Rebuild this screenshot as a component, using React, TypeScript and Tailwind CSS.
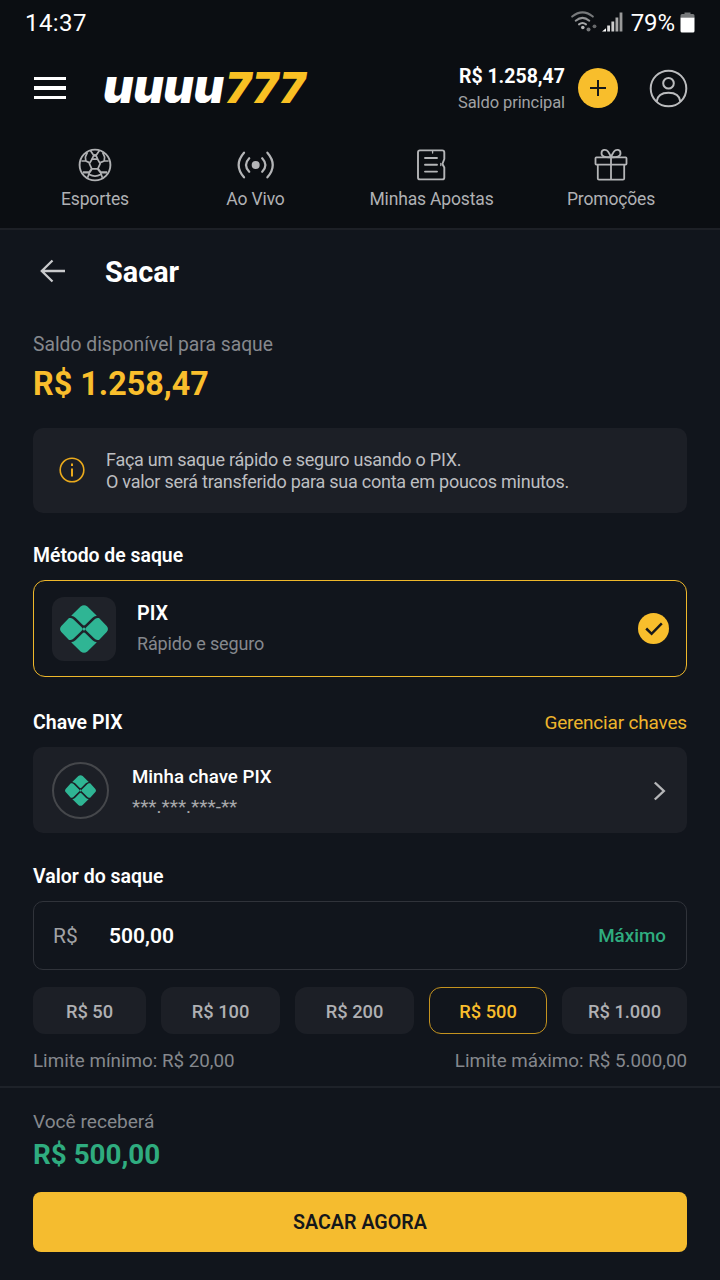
import React from "react";
import clsx from "clsx";

// --- Icons ---
const PixIcon = ({ className }: { className?: string }) => (
  <svg viewBox="0 0 48 48" className={className} fill="#2fb594">
    <path d="M20.6 1.6 Q24 -1.2 27.4 1.6 L36.8 10.8 Q34 11.2 32.2 12.9 L25.4 19.8 Q24 21.3 22.6 19.8 L15.8 12.9 Q14 11.2 11.2 10.8 Z" />
    <path d="M20.6 46.4 Q24 49.2 27.4 46.4 L36.8 37.2 Q34 36.8 32.2 35.1 L25.4 28.2 Q24 26.7 22.6 28.2 L15.8 35.1 Q14 36.8 11.2 37.2 Z" />
    <path d="M9 12.9 H10.6 Q12.4 13.1 13.6 14.4 L21.4 22 Q23.8 24 21.4 26 L13.6 33.6 Q12.4 34.9 10.6 35.1 H9 L1.3 26.9 Q-1.2 24 1.3 21.1 Z" />
    <path d="M39 12.9 H37.4 Q35.6 13.1 34.4 14.4 L26.6 22 Q24.2 24 26.6 26 L34.4 33.6 Q35.6 34.9 37.4 35.1 H39 L46.7 26.9 Q49.2 24 46.7 21.1 Z" />
    <circle cx="24" cy="24" r="1.5" />
  </svg>
);

const BallIcon = () => (
  <svg width="34" height="34" viewBox="0 0 34 34" fill="none" stroke="#b0b1b3" strokeWidth="1.7" strokeLinejoin="round">
    <circle cx="17" cy="17" r="15.4" strokeWidth="1.9" />
    <path d="M14 11.2 H19.6 L22.2 15.6 L19.8 20.8 H13.8 L11.4 15.6 Z" />
    <path d="M14 11.2 L15.8 7.4 L12.4 2.6 M19.6 11.2 L18 7.4 L21.4 2.6" />
    <path d="M15.8 7.4 H18" strokeWidth="2.6" />
    <path d="M11.4 14.6 L7.8 13 H3.4 M7.8 13 L7.4 9 L9.4 4.4 M22.2 14.6 L26.2 13 H30.6 M26.2 13 L26.6 9 L24.6 4.4" />
    <path d="M13.8 20.8 L11.4 24.4 H4.8 M19.8 20.8 L22.6 24.4 H29.2" strokeWidth="2.2" />
    <path d="M11.4 24.4 L9.6 29.8 M22.6 24.4 L24.4 29.8 M11.4 26.6 Q17 29.8 22.6 26.6" />
  </svg>
);

const LiveIcon = () => (
  <svg width="38" height="34" viewBox="0 0 38 34" fill="none" stroke="#b4b5b7" strokeWidth="2.2" strokeLinecap="round">
    <circle cx="18.7" cy="17" r="4" fill="#b4b5b7" stroke="none" />
    <path d="M12.2 10.2 Q5.8 17 12.2 23.8 M25.2 10.2 Q31.6 17 25.2 23.8" />
    <path d="M7 4.7 Q-3.7 17 7 29.3 M30.4 4.7 Q41.1 17 30.4 29.3" />
  </svg>
);

const BetsIcon = () => (
  <svg width="34" height="34" viewBox="0 0 34 34" fill="none" stroke="#b4b5b7" strokeWidth="1.9" strokeLinecap="round" strokeLinejoin="round">
    <path d="M4.6 2.4 H27.2 Q29.3 2.4 29.3 4.4 V11 L27.4 16 L29.3 19.5 V29.4 Q29.3 31.4 27.2 31.4 H5 Q3 31.4 3 29.4 V4.4 Q3 2.4 5 2.4" />
    <path d="M10 10 H22 M10 16.8 H22 M10 23.6 H22" />
    <path d="M17.6 3 V5 M25.8 15.4 V17.6" strokeWidth="1.3" />
  </svg>
);

const GiftIcon = () => (
  <svg width="34" height="34" viewBox="0 0 34 34" fill="none" stroke="#b4b5b7" strokeWidth="1.8" strokeLinejoin="round">
    <rect x="1.5" y="9.4" width="31" height="7.2" rx="0.8" />
    <path d="M3.8 16.6 V30.4 Q3.8 31.6 5 31.6 H29 Q30.2 31.6 30.2 30.4 V16.6" />
    <path d="M17 9 V31.4" />
    <path d="M17 9.2 C11 9.4 7.5 8.6 7.5 5.2 C7.5 1.4 12 .8 14 3.6 C15.3 5.4 16.2 7.2 17 9.2 Z" />
    <path d="M17 9.2 C23 9.4 26.5 8.6 26.5 5.2 C26.5 1.4 22 .8 20 3.6 C18.7 5.4 17.8 7.2 17 9.2 Z" />
  </svg>
);

const WifiIcon = () => (
  <svg width="26" height="22" viewBox="0 0 26 22" fill="none" strokeLinecap="round">
    <path d="M1.2 5.6 Q11.5 -2.8 21.8 5.6" stroke="#77797b" strokeWidth="2" />
    <path d="M4.7 9.7 Q11.5 4 18.3 9.7" stroke="#919294" strokeWidth="2" />
    <path d="M8 13.4 Q11.5 10.7 15 13.4" stroke="#a4a5a6" strokeWidth="2" />
    <circle cx="11.8" cy="16.5" r="1.8" fill="#b5b6b7" />
    <circle cx="17.5" cy="18.6" r="2" fill="#77797b" />
    <circle cx="23.5" cy="15.3" r="1.9" fill="#67696b" />
  </svg>
);

const SignalIcon = () => (
  <svg width="22" height="20" viewBox="0 0 22 20">
    <path d="M0 19.5 L4 16.2 V19.5 Z" fill="#fff" />
    <rect x="5.2" y="13.5" width="2.8" height="6" fill="#ddd" />
    <rect x="9.4" y="9.5" width="2.8" height="10" fill="#ccc" />
    <rect x="13.5" y="5.5" width="2.8" height="14" fill="#aaa" />
    <rect x="17.6" y="0.5" width="2.8" height="19" fill="#999" />
  </svg>
);

const BatteryIcon = () => (
  <svg width="15" height="21" viewBox="0 0 15 21">
    <path d="M4.5 0.5 H10.5 V2 H13 Q14.5 2 14.5 3.5 V5.5 H0.5 V3.5 Q0.5 2 2 2 H4.5 Z" fill="#77797b" />
    <path d="M0.5 5.5 H14.5 V19 Q14.5 20.5 13 20.5 H2 Q0.5 20.5 0.5 19 Z" fill="#fff" />
  </svg>
);

const tabs = [
  { label: "Esportes", icon: <BallIcon />, width: "w-[160px]" },
  { label: "Ao Vivo", icon: <LiveIcon />, width: "w-[161px]" },
  { label: "Minhas Apostas", icon: <BetsIcon />, width: "w-[191px]" },
  { label: "Promoções", icon: <GiftIcon />, width: "w-[168px]" },
];

const amounts = [
  { label: "R$ 50", width: "w-[113px]" },
  { label: "R$ 100", width: "w-[119px]" },
  { label: "R$ 200", width: "w-[119px]" },
  { label: "R$ 500", width: "w-[118px]", active: true },
  { label: "R$ 1.000", width: "w-[125px]" },
];

const Header = () => (
  <header className="border-b-2 border-[#1d2026] bg-[#0b0e12]">
    <div className="flex h-11 items-center px-[25px]">
      <span className="pt-px text-[24px] leading-7 tracking-[0.4px]">14:37</span>
      <div className="ml-auto flex items-center">
        <WifiIcon />
        <span className="ml-[5px] flex"><SignalIcon /></span>
        <span className="ml-[7px] pt-px text-[24px] leading-7 tracking-[-0.1px]">79%</span>
        <span className="ml-[5px] flex"><BatteryIcon /></span>
      </div>
    </div>

    <div className="flex h-[88px] items-center pr-8 pl-[34px]">
      <button className="flex w-8 flex-col gap-[6px]" aria-label="Menu">
        <span className="h-[3.5px] bg-white" />
        <span className="h-[3.5px] bg-white" />
        <span className="h-[3.5px] bg-white" />
      </button>
      <div className="mb-[5px] ml-[37px] flex h-[46px] items-baseline font-[Inter,sans-serif] font-black italic">
        <span className="text-[47px] leading-[46px] tracking-[-0.4px] text-white">uuuu</span>
        <span className="ml-[2px] text-[43px] leading-[46px] tracking-[0.5px] text-[#f9c023]">777</span>
      </div>
      <div className="ml-auto flex items-center">
        <div className="pt-[3px] text-right">
          <div className="text-[19.5px] leading-[26px] font-bold">R$ 1.258,47</div>
          <div className="text-[16.5px] leading-[26px] tracking-[-0.1px] text-[#a0a2a5]">Saldo principal</div>
        </div>
        <button className="ml-[13px] flex size-10 items-center justify-center rounded-full bg-[#f8be2c]" aria-label="Depositar">
          <svg width="18" height="18" viewBox="0 0 18 18" stroke="#15171b" strokeWidth="2">
            <path d="M9 1 V17 M1 9 H17" />
          </svg>
        </button>
        <button className="ml-[31px] flex" aria-label="Conta">
          <svg width="39" height="39" viewBox="0 0 39 39" fill="none" stroke="#bbbcbe" strokeWidth="2">
            <circle cx="19.5" cy="19.5" r="17.8" />
            <circle cx="19.5" cy="14.3" r="5.3" />
            <path d="M7.6 32.6 C8.4 26.4 13 23.8 19.5 23.8 C26 23.8 30.6 26.4 31.4 32.6" />
          </svg>
        </button>
      </div>
    </div>

    <nav className="flex h-24 pt-4 pl-[15px]">
      {tabs.map((tab) => (
        <a key={tab.label} className={clsx("flex flex-col items-center gap-[5px]", tab.width)}>
          {tab.icon}
          <span className="text-[17.5px] leading-6 tracking-[-0.15px] text-[#b0b1b4]">{tab.label}</span>
        </a>
      ))}
    </nav>
  </header>
);

export default function App() {
  return (
    <div className="flex h-[1280px] w-[720px] flex-col overflow-hidden bg-[#11151c] font-[Roboto,sans-serif] text-white">
      <Header />

      <main className="flex h-[856px] flex-col px-[33px]">
        <div className="flex h-[82px] items-center pl-[7px]">
          <svg width="26" height="24" viewBox="0 0 26 24" fill="none" stroke="#c9cacc" strokeWidth="2.3">
            <path d="M12.5 1.5 L1.8 12 L12.5 22.5 M1.8 12 H25" />
          </svg>
          <h1 className="ml-[39px] pt-px text-[28.8px] leading-8 font-bold">Sacar</h1>
        </div>

        <p className="mt-[21px] text-[19.3px] leading-6 text-[#85888d]">Saldo disponível para saque</p>
        <p className="mt-[7px] text-[32.3px] leading-10 font-bold text-[#f9be2c]">R$ 1.258,47</p>

        <div className="mt-[24px] flex h-[85px] items-center rounded-[10px] bg-[#1c1f26] pl-[26px]">
          <svg className="mb-px" width="26" height="26" viewBox="0 0 26 26" fill="none" stroke="#eaaa1c" strokeWidth="1.6">
            <circle cx="13" cy="13" r="11.8" />
            <path d="M13 11.6 V19.5" strokeWidth="2" />
            <path d="M13 6.4 V9" strokeWidth="2" />
          </svg>
          <p className="ml-[21px] text-[18px] leading-[22px] tracking-[-0.25px] text-[#bdbec1]">
            Faça um saque rápido e seguro usando o PIX.
            <br />
            O valor será transferido para sua conta em poucos minutos.
          </p>
        </div>

        <h2 className="mt-[31px] text-[19.4px] leading-6 font-semibold">Método de saque</h2>
        <div className="mt-[12px] flex h-[97px] shrink-0 items-center rounded-xl border-[1.5px] border-[#efb82b] pr-[17px] pl-[18px]">
          <div className="flex size-16 items-center justify-center rounded-xl bg-[#1f2229]">
            <PixIcon className="size-12" />
          </div>
          <div className="ml-[21px] pt-px">
            <div className="text-[19.8px] leading-[30px] font-semibold">PIX</div>
            <div className="text-[18px] leading-[30px] tracking-[-0.15px] text-[#85888d]">Rápido e seguro</div>
          </div>
          <div className="ml-auto flex size-[31px] items-center justify-center rounded-full bg-[#f8be2c]">
            <svg width="18" height="14" viewBox="0 0 18 14" fill="none" stroke="#15171b" strokeWidth="2.5">
              <path d="M1.2 6.5 L6.6 11.8 L16.8 1.4" />
            </svg>
          </div>
        </div>

        <div className="mt-[34px] flex justify-between leading-6">
          <h2 className="text-[19.5px] font-semibold">Chave PIX</h2>
          <a className="text-[19px] tracking-[-0.18px] text-[#eeb42c]">Gerenciar chaves</a>
        </div>
        <div className="mt-[12px] flex h-[86px] shrink-0 items-center rounded-[10px] bg-[#1c1f26] pt-px pr-[21px] pl-[19px]">
          <div className="flex size-[57px] items-center justify-center rounded-full border-2 border-[#45474b]">
            <PixIcon className="size-[31px]" />
          </div>
          <div className="ml-[23px] pt-[2px]">
            <div className="text-[18.7px] leading-[29px] font-medium">Minha chave PIX</div>
            <div className="text-[19px] leading-[29px] text-[#a7a8ab]">***.***.***-**</div>
          </div>
          <svg className="ml-auto" width="13" height="20" viewBox="0 0 13 20" fill="none" stroke="#b5b6b8" strokeWidth="2.4">
            <path d="M1.8 1.5 L10.8 10 L1.8 18.5" />
          </svg>
        </div>

        <h2 className="mt-[32px] text-[19.5px] leading-6 font-semibold">Valor do saque</h2>
        <div className="mt-[12px] flex h-[69px] shrink-0 items-center rounded-[10px] border-[1.5px] border-[#30333a] pt-[2px] pr-5 pl-[19px]">
          <span className="w-14 text-[21px] text-[#a0a2a5]">R$</span>
          <span className="text-[21px] font-semibold">500,00</span>
          <span className="ml-auto text-[18.8px] font-medium text-[#2fac7f]">Máximo</span>
        </div>

        <div className="mt-[17px] flex h-[47px] shrink-0 gap-[15px]">
          {amounts.map((amount) => (
            <button
              key={amount.label}
              className={clsx(
                "flex items-center justify-center rounded-xl pt-[2px] text-[18.3px] font-medium",
                amount.width,
                amount.active ? "border border-[#c4931f] text-[#f9be2c]" : "bg-[#1c1f26] text-[#afb0b3]",
              )}
            >
              {amount.label}
            </button>
          ))}
        </div>

        <div className="mt-[15px] flex justify-between text-[18.8px] leading-6 text-[#85888d]">
          <span>Limite mínimo: R$ 20,00</span>
          <span>Limite máximo: R$ 5.000,00</span>
        </div>
      </main>

      <footer className="flex flex-1 flex-col border-t-2 border-[#1e2229] px-[33px] pt-[22px]">
        <p className="text-[19.1px] leading-6 text-[#85888d]">Você receberá</p>
        <p className="mt-[3px] text-[27.8px] leading-9 font-bold text-[#2fac7f]">R$ 500,00</p>
        <button className="mt-[19px] h-[60px] rounded-lg bg-[#f5bc2f] pt-[2px] text-[19.7px] font-semibold text-[#15171b]">
          SACAR AGORA
        </button>
      </footer>
    </div>
  );
}
